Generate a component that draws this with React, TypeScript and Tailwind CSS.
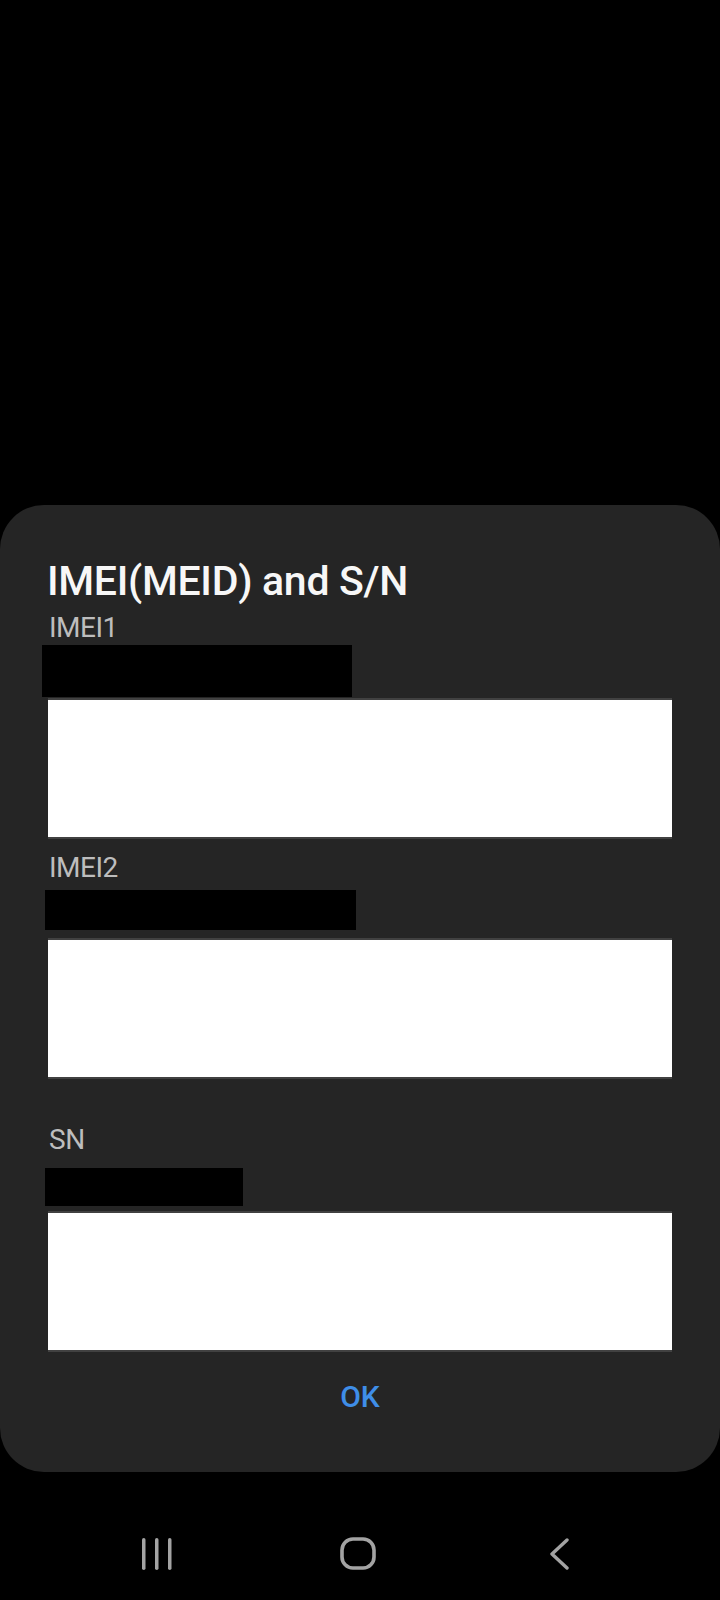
import React from "react";

function Field({ label, labelClass, maskClass, gapClass }: { label: string; labelClass: string; maskClass: string; gapClass: string }) {
    return (
        <>
            <div className={"text-[#bdbdbd] text-[28px] h-[28px] leading-none tracking-[-0.5px] ml-[1px] " + labelClass}>{label}</div>
            <div className={"bg-black " + maskClass}></div>
            <div className={"border-y-2 border-[#414141] " + gapClass}>
                <div className="h-[137px] bg-white"></div>
            </div>
        </>
    );
}

export default function App() {
    return (
        <div className="w-[720px] h-[1600px] bg-black flex flex-col" style={{ fontFamily: "Roboto, 'Noto Sans', sans-serif" }}>
            <div className="h-[505px] shrink-0"></div>

            <div className="h-[967px] shrink-0 bg-[#252525] rounded-[44px] px-[48px] pt-[56px] flex flex-col">
                <div className="text-[41px] leading-[41px] font-medium text-[#f7f7f7] -ml-[1px] tracking-[-0.3px]">
                    IMEI(MEID) and S/N
                </div>

                <Field
                    label="IMEI1"
                    labelClass="mt-[12px]"
                    maskClass="mt-[3px] h-[52px] w-[310px] -ml-[6px]"
                    gapClass="mt-[1px]"
                />
                <Field
                    label="IMEI2"
                    labelClass="mt-[15px]"
                    maskClass="mt-[8px] h-[40px] w-[311px] -ml-[3px]"
                    gapClass="mt-[8px]"
                />
                <Field
                    label="SN"
                    labelClass="mt-[47px]"
                    maskClass="mt-[14px] h-[38px] w-[198px] -ml-[3px]"
                    gapClass="mt-[5px]"
                />

                <div className="mt-[30px] text-center text-[30px] leading-[30px] font-medium text-[#3f8ee8]">OK</div>
            </div>

            <div className="flex-1 flex items-start justify-center pt-[65px]">
                <div className="grid grid-cols-[201px_201px_201px] -ml-[5px] items-center justify-items-center">
                    <svg width="34" height="32" viewBox="0 0 34 32" fill="none">
                        <rect x="2" y="0" width="3.5" height="32" rx="1.75" fill="#a3a3a3" />
                        <rect x="15" y="0" width="3.5" height="32" rx="1.75" fill="#a3a3a3" />
                        <rect x="28" y="0" width="3.5" height="32" rx="1.75" fill="#a3a3a3" />
                    </svg>
                    <svg width="36" height="33" viewBox="0 0 36 33" fill="none">
                        <rect x="2" y="2" width="32" height="29" rx="11" stroke="#a3a3a3" strokeWidth="3.6" />
                    </svg>
                    <svg width="22" height="32" viewBox="0 0 22 32" fill="none">
                        <path d="M19 2 L4 16 L19 30" stroke="#a3a3a3" strokeWidth="3.4" strokeLinecap="round" strokeLinejoin="round" />
                    </svg>
                </div>
            </div>
        </div>
    );
}
